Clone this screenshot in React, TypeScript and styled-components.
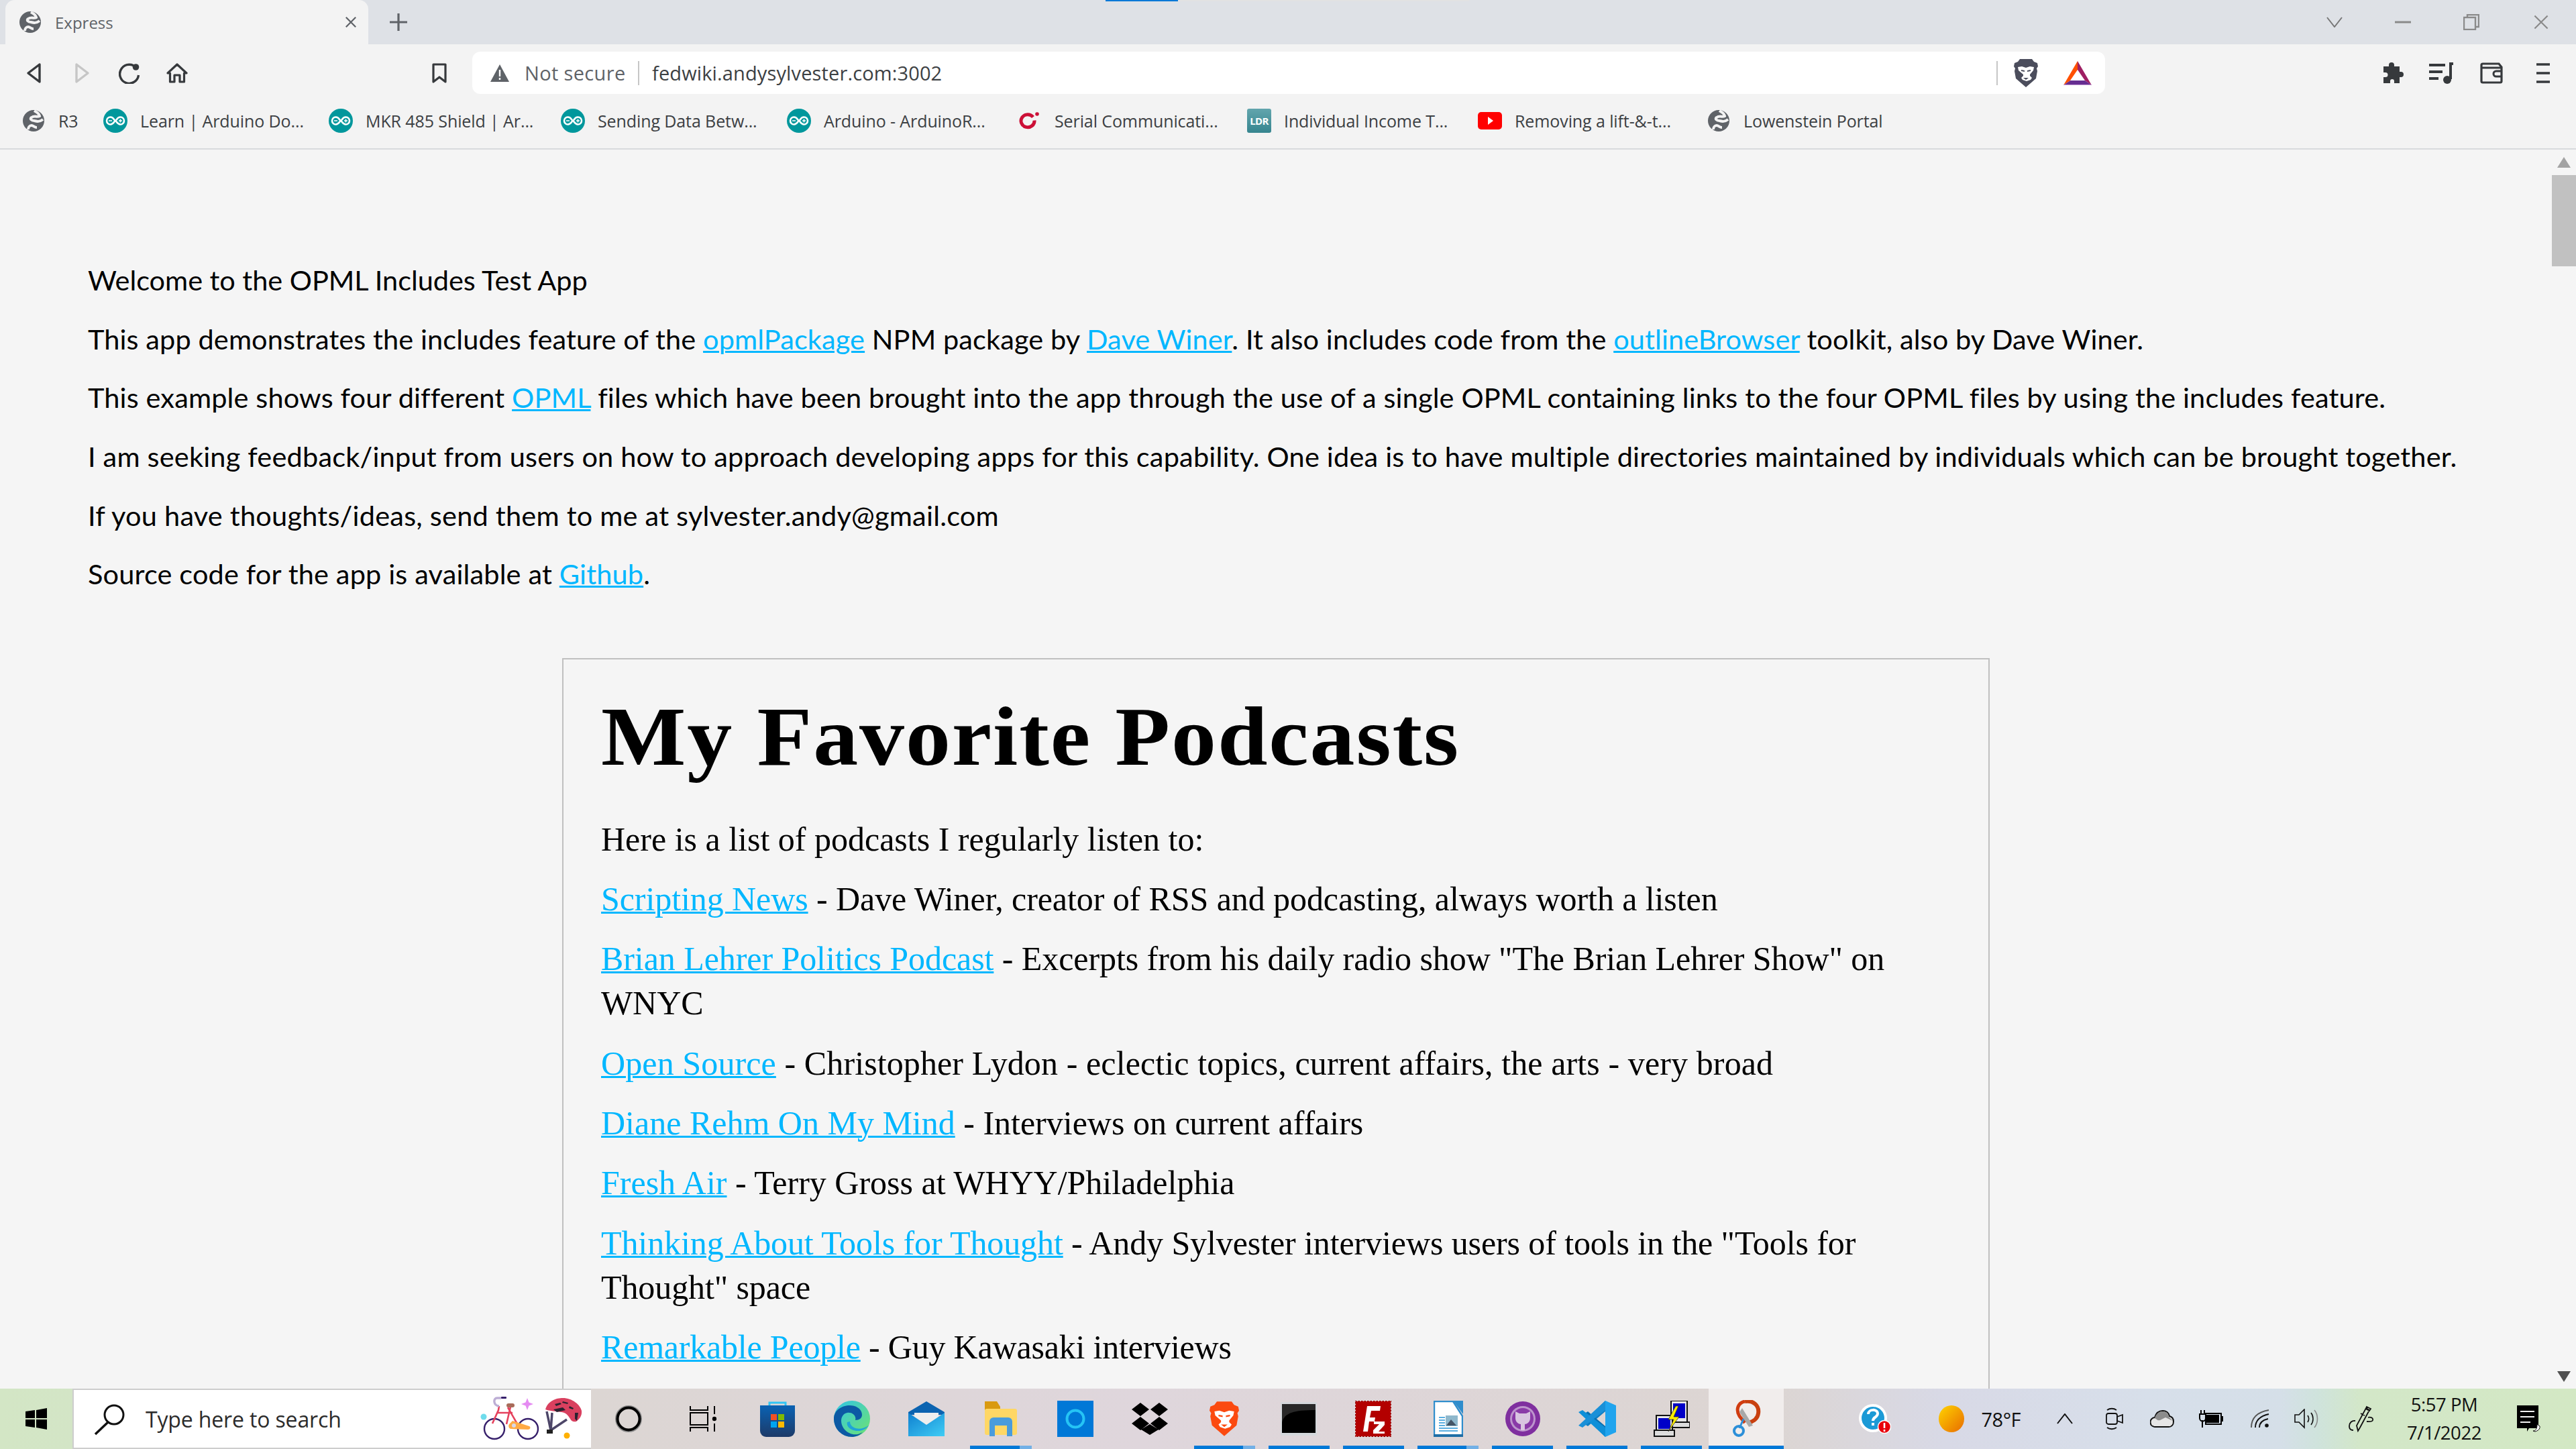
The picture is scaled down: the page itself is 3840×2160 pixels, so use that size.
import React from 'react';
import styled, { createGlobalStyle } from 'styled-components';

const Global = createGlobalStyle`
  html, body { margin: 0; padding: 0; width: 3840px; height: 2160px; overflow: hidden; background: #f5f5f5; }
  * { box-sizing: border-box; }
`;
const UI = `"Open Sans", "Noto Sans", sans-serif`;

const Screen = styled.div`width:3840px;height:2160px;display:flex;flex-direction:column;overflow:hidden;position:relative;font-family:${UI};`;
const LoadBar = styled.div`position:absolute;top:0;left:1648px;width:542px;height:2px;background:#e2e2e2;`;
const LoadFill = styled.div`width:108px;height:100%;background:#0078d7;`;

const TabStrip = styled.div`height:66px;background:#dee1e6;display:flex;align-items:flex-end;padding-left:8px;flex:none;`;
const Tab = styled.div`width:541px;height:66px;background:#f3f3f3;border-radius:14px 14px 0 0;display:flex;align-items:center;padding:0 17px 0 21px;`;
const TabTitle = styled.span`margin-left:21px;font-size:24px;color:#5f6368;flex:1;letter-spacing:0;`;
const NewTab = styled.div`width:46px;height:66px;margin-left:22px;display:flex;align-items:center;justify-content:center;`;
const Grow = styled.div`flex:1;`;
const WinButton = styled.div<{ $w: number; $ml?: number }>`width:${p => p.$w}px;margin-left:${p => p.$ml ?? 0}px;height:66px;display:flex;align-items:center;justify-content:center;`;

const Toolbar = styled.div`height:74px;background:#f3f3f3;display:flex;align-items:flex-start;padding:11px 0 0 15px;flex:none;`;
const ToolSlot = styled.div<{ $w: number; $ml?: number; $pl?: number }>`width:${p => p.$w}px;margin-left:${p => p.$ml ?? 0}px;padding-left:${p => p.$pl ?? 0}px;height:63px;display:flex;align-items:center;justify-content:center;flex:none;`;
const Omnibox = styled.div`width:2434px;height:63px;background:#fff;border-radius:12px;display:flex;align-items:center;margin:0 0 0 26px;flex:none;`;
const NotSecure = styled.span`font-size:29px;color:#5f6368;margin-left:12px;letter-spacing:.35px;width:169px;white-space:nowrap;`;
const OmniSep = styled.div`width:2px;height:36px;background:#c6c6c6;flex:none;`;
const Url = styled.span`font-size:29px;color:#3c4043;margin-left:19px;letter-spacing:.13px;white-space:nowrap;width:2004px;`;

const BookmarkBar = styled.div`height:83px;background:#f3f3f3;border-bottom:2px solid #d8dadd;display:flex;align-items:center;padding:0 0 2px 32px;gap:38px;flex:none;`;
const Bookmark = styled.div`display:flex;align-items:center;gap:19px;`;
const BookmarkIconBox = styled.div`width:36px;height:36px;display:flex;align-items:center;justify-content:center;flex:none;`;
const BookmarkLabel = styled.span<{ $w: number }>`width:${p => p.$w}px;font-size:25px;color:#3c4043;white-space:nowrap;letter-spacing:-.1px;`;
const LdrBadge = styled.div`width:36px;height:36px;border-radius:3px;background:linear-gradient(#62a5ad,#36858f);color:#fff;font-size:15px;font-weight:700;display:flex;align-items:center;justify-content:center;letter-spacing:-.6px;`;

const Viewport = styled.div`flex:1;min-height:0;display:flex;background:#f5f5f5;overflow:hidden;`;
const Page = styled.div`width:3804px;height:100%;overflow:hidden;padding-top:161px;flex:none;`;
const Intro = styled.p<{ $s: number }>`margin:0 0 21.7px;padding-left:131px;font:400 41.5px/66px "Lato",sans-serif;color:#000;letter-spacing:${p => p.$s}px;white-space:nowrap;`;
const Link = styled.a`color:#00b7ff;text-decoration:underline;text-decoration-thickness:3px;`;
const Card = styled.div`width:2128px;margin:93px auto 0;border:2px solid #c0c0c0;padding:0 56px 240px;`;
const Title = styled.h1`margin:57px 0 0;font:700 124px/118px "Liberation Serif",serif;letter-spacing:1.75px;color:#000;white-space:nowrap;transform:scaleX(1.08);transform-origin:left center;`;
const Para = styled.p<{ $s?: number }>`margin:0 0 23px;font:400 50px/66.3px "Liberation Serif",serif;color:#000;letter-spacing:${p => p.$s ?? 0}px;`;
const IntroPara = styled(Para)`margin-top:60px;margin-bottom:22px;`;

const Scrollbar = styled.div`width:36px;height:100%;background:#f5f5f5;display:flex;flex-direction:column;align-items:center;flex:none;`;
const ScrollBtn = styled.div<{ $h?: number }>`height:${p => p.$h ?? 36}px;width:36px;display:flex;align-items:center;justify-content:center;flex:none;`;
const Thumb = styled.div`width:36px;height:136px;margin-top:0;background:#c1c1c1;flex:none;`;

const Taskbar = styled.div`height:90px;flex:none;display:flex;background:linear-gradient(90deg,#d3e6c5 0,#d3e5c6 108px,#dcd6d3 881px,#dfd6dc 1700px,#dcd5d2 2640px,#d8d9e6 2900px,#d7dfea 3200px,#d5dfe8 3400px,#cfe3dc 3455px,#d3e7c8 3520px,#d3e8c4 3840px);`;
const StartBtn = styled.div`width:108px;display:flex;align-items:center;justify-content:center;flex:none;padding-left:0;`;
const SearchBox = styled.div`width:773px;height:90px;flex:none;background:#fff;border:2px solid #cdcdcd;border-right:none;display:flex;align-items:center;padding:0 10px 0 29px;`;
const SearchText = styled.span`margin-left:28px;font-size:32px;color:#2b2b2b;letter-spacing:-.15px;flex:1;white-space:nowrap;`;
const Slot = styled.div<{ $active?: boolean }>`width:111.1px;height:90px;flex:none;position:relative;display:flex;align-items:center;justify-content:center;background:${p => p.$active ? '#f1edec' : 'transparent'};`;
const RunBar = styled.div<{ $full?: boolean }>`position:absolute;bottom:0;left:${p => p.$full ? 0 : 10}px;right:${p => p.$full ? 0 : 10}px;height:5px;background:#0078d7;`;
const RunBarStack = styled.div`position:absolute;bottom:0;right:10px;width:18px;height:5px;background:#72b0e6;`;
const Tray = styled.div`flex:1;display:flex;align-items:stretch;padding-left:100px;`;
const TraySlot = styled.div<{ $w: number; $ml?: number }>`width:${p => p.$w}px;margin-left:${p => p.$ml ?? 0}px;display:flex;align-items:center;justify-content:center;flex:none;`;
const Temp = styled.div`width:105px;padding-left:15px;font-size:29px;color:#111;display:flex;align-items:center;letter-spacing:-.5px;`;
const Clock = styled.div`width:156px;display:flex;flex-direction:column;align-items:center;justify-content:center;gap:10px;font-size:27.5px;line-height:32px;color:#111;letter-spacing:-.45px;`;

type S = { s?: number };
const Globe = ({ s = 32 }: S) => (
  <svg width={s} height={s} viewBox="0 0 32 32"><circle cx="16" cy="16" r="16" fill="#5f6368"/><path d="M17 1c3 2 7 3 8 8-3 2-8-1-12 2-3 2 0 5 4 5 4 1 8 2 13-2M8 29c0-3 2-6 5-6 3 0 4 3 8 3" fill="none" stroke="#f3f3f3" strokeWidth="4"/></svg>
);
const Arduino = () => (
  <svg width="36" height="36" viewBox="0 0 36 36"><circle cx="18" cy="18" r="18" fill="#00979c"/><path d="M10.5 12.5c5 0 6 5.500 7.500 5.500s2.500-5.500 7.500-5.500a5.500 5.500 0 0 1 0 11c-5 0-6-5.500-7.500-5.500s-2.500 5.500-7.500 5.500a5.500 5.500 0 0 1 0-11z" fill="none" stroke="#fff" strokeWidth="2.600"/><path d="M8 18h5M23 18h5M25.500 15.500v5" stroke="#fff" strokeWidth="1.600"/></svg>
);
const Opto = () => (
  <svg width="36" height="36" viewBox="0 0 36 36"><path d="M23 12.500a10 9.500 0 1 0 2 5" fill="none" stroke="#cc1037" strokeWidth="5"/><circle cx="29" cy="8" r="2.800" fill="#cc1037"/></svg>
);
const YouTube = () => (
  <svg width="36" height="36" viewBox="0 0 36 36"><rect y="5" width="36" height="26" rx="5" fill="#f00"/><path d="M15 12l8 6-8 6z" fill="#fff"/></svg>
);
const X = ({ s = 20, c = '#5f6368', w = 2.500 }: S & { c?: string; w?: number }) => (
  <svg width={s} height={s} viewBox="0 0 20 20"><path d="M2 2l16 16M18 2L2 18" stroke={c} strokeWidth={w} fill="none"/></svg>
);
const Back = ({ c = '#36393c', flip }: { c?: string; flip?: boolean }) => (
  <svg width="24" height="32" viewBox="0 0 24 32"><path d={flip ? 'M4 3l17 13L4 29z' : 'M20 3 3 16l17 13z'} fill="none" stroke={c} strokeWidth="3.400" strokeLinejoin="round"/></svg>
);
const Reload = () => (
  <svg width="32" height="32" viewBox="0 0 32 32"><path d="M26.500 8.500A14 14 0 1 0 29.500 19" fill="none" stroke="#36393c" strokeWidth="3.400"/><circle cx="25.500" cy="7" r="4.800" fill="#36393c"/></svg>
);
const Home = () => (
  <svg width="32" height="30" viewBox="0 0 32 30"><path d="M2 15 16 2l14 13h-3.500v13H20V18h-8v10H5.500V15z" fill="none" stroke="#36393c" strokeWidth="3.200" strokeLinejoin="round"/></svg>
);
const BookmarkIcon = () => (
  <svg width="22" height="30" viewBox="0 0 22 30"><path d="M2 2h18v26l-9-7-9 7z" fill="none" stroke="#36393c" strokeWidth="3.200" strokeLinejoin="round"/></svg>
);
const Warn = () => (
  <svg width="28" height="26" viewBox="0 0 28 26"><path d="M14 0l14 26H0z" fill="#5f6368"/><path d="M12.800 8h2.400v10h-2.400zM12.800 20h2.400v3h-2.400z" fill="#fff"/></svg>
);
const LionMark = ({ w, h, face, body }: { w: number; h: number; face: string; body: string }) => (
  <svg width={w} height={h} viewBox="0 0 36 42">
    <path d="M9 0h18l3 4 5 2 1 5-2 3 1 4-2 11-8 7-7 6-7-6-8-7L1 18l1-4-2-3 1-5 5-2z" fill={body}/>
    <path d="M6 12l6-1 6 2 6-2 6 1-1 5-5 6v2l3 3-2 3-6 2-6-2-2-3 3-3v-2L7 17z" fill={face}/>
    <path d="M11 16l5 1v2l-5-1zM25 16l-5 1v2l5-1zM14 28h8l-4 3z" fill={body}/>
  </svg>
);
const Bat = () => (
  <svg width="42" height="36" viewBox="0 0 42 36">
    <path d="M21 0v13L10 29 0 36z" fill="#ff5000"/>
    <path d="M21 0l21 36-10-7-11-16z" fill="#9e1f63"/>
    <path d="M0 36l10-7h22l10 7z" fill="#662d91"/>
    <path d="M0 35.500h42" stroke="#c39ad4" strokeWidth="1"/>
  </svg>
);
const Puzzle = () => (
  <svg width="34" height="34" viewBox="0 0 34 34"><path d="M3 7h8V5a4 4 0 0 1 8 0v2h8v8h2a4 4 0 0 1 0 8h-2v9H19v-3a3 3 0 0 0-6 0v3H3v-9h3a3.500 3.500 0 0 0 0-7H3z" fill="#36393c"/></svg>
);
const Playlist = () => (
  <svg width="36" height="32" viewBox="0 0 36 32"><path d="M0 4h24M0 14h20M0 24h14M32 3v22" stroke="#36393c" strokeWidth="4" fill="none"/><path d="M30 2h6" stroke="#36393c" strokeWidth="4"/><circle cx="27" cy="26" r="6" fill="#36393c"/></svg>
);
const Wallet = () => (
  <svg width="34" height="32" viewBox="0 0 34 32"><path d="M4 2h24l4 5v21a2 2 0 0 1-2 2H4a2 2 0 0 1-2-2V4a2 2 0 0 1 2-2zM2 8h30" fill="none" stroke="#36393c" strokeWidth="3.200"/><path d="M32 13h-8a3.500 3.500 0 0 0 0 8h8" fill="none" stroke="#36393c" strokeWidth="3"/></svg>
);
const Menu = () => (
  <svg width="22" height="32" viewBox="0 0 22 32"><path d="M1 3h20M1 16h20M1 29h20" stroke="#36393c" strokeWidth="3.600"/></svg>
);
const Chevron = ({ up, c = '#777' }: { up?: boolean; c?: string }) => (
  <svg width="24" height="16" viewBox="0 0 24 16"><path d={up ? 'M1 15 12 1l11 14' : 'M1 1l11 14L23 1'} fill="none" stroke={c} strokeWidth="2"/></svg>
);
const Arrow = ({ down }: { down?: boolean }) => (
  <svg width="20" height="18" viewBox="0 0 20 18"><path d={down ? 'M10 17 20 1H0z' : 'M10 1l10 16H0z'} fill={down ? '#505050' : '#a3a3a3'}/></svg>
);

const WinLogo = () => (
  <svg width="32" height="32" viewBox="0 0 32 32"><path d="M0 5l14-2v12H0zM16 3l16-3v15H16zM0 17h14v12L0 27zM16 17h16v15l-16-3z" fill="#000"/></svg>
);
const SearchIcon = () => (
  <svg width="50" height="50" viewBox="0 0 50 50"><circle cx="31" cy="19" r="14" fill="none" stroke="#111" strokeWidth="3"/><path d="M22 30 3 48" stroke="#111" strokeWidth="3.500"/></svg>
);
const BikeArt = () => (
  <svg width="156" height="70" viewBox="0 0 156 70">
    <circle cx="6" cy="32" r="4.500" fill="#6fdcec"/>
    <path d="M71 4l2.500 6.500L80 13l-6.500 2.500L71 22l-2.500-6.500L62 13l6.500-2.500z" fill="#e58bf2"/>
    <g fill="none" strokeWidth="2.400" stroke="#37206b"><circle cx="22" cy="50" r="15"/><circle cx="72" cy="50" r="15"/></g>
    <path d="M29 16l-1 6-9 20M27 26l22 0M46 17l-6 26M42 18l16 28" fill="none" stroke="#e5425d" strokeWidth="2.600"/>
    <path d="M32 4h-6c-6 0-6 11 3 12" fill="none" stroke="#bdaed5" strokeWidth="3.400"/>
    <rect x="32" y="2" width="8" height="3" rx="1" fill="#37206b"/>
    <rect x="40" y="12" width="12" height="6" rx="3" fill="#a86c5a"/>
    <path d="M44 43l5-5 25 8c3 2 1 5-2 5l-25-1c-3 0-5-4-3-7z" fill="#ffaa44"/><circle cx="51" cy="45" r="3" fill="#d8d8e8"/>
    <path d="M100 24l6 28 24-16" fill="none" stroke="#4d4668" strokeWidth="3.500"/><path d="M108 26l-2 26" stroke="#4d4668" strokeWidth="3.500"/><rect x="100" y="51" width="9" height="6" fill="#222"/>
    <path d="M98 21c4-13 16-17 26-17 14 0 26 10 28 19 1 8-4 13-8 16-4 1-7 0-9-4-3-5-6-9-13-10-10-2-17-1-24-4z" fill="#d9405f"/>
    <path d="M112 13l8-2 2 2-8 3zM124 9l8 2-1 2-8-2zM110 21l14-3 4 4-13 3zM134 16l6 3-1 2-6-2zM142 26l5 0-2 12-3-3z" fill="#2b2230"/>
    <circle cx="130" cy="60" r="4.500" fill="#ffb000"/>
  </svg>
);
const Cortana = () => (
  <svg width="40" height="40" viewBox="0 0 40 40"><circle cx="20" cy="20" r="18" fill="none" stroke="#8a8a8a" strokeWidth="4"/><circle cx="20" cy="20" r="16.500" fill="none" stroke="#000" strokeWidth="4"/></svg>
);
const TaskView = () => (
  <svg width="40" height="40" viewBox="0 0 40 40"><path d="M1 1v6h26V1M1 39v-6h26v6M1 11h26v18H1zM37 1v12M37 27v12" fill="none" stroke="#000" strokeWidth="2"/><circle cx="37" cy="20" r="3.200" fill="#000"/></svg>
);
const Store = () => (
  <svg width="52" height="54" viewBox="0 0 52 54">
    <defs><linearGradient id="st" x1="0" y1="0" x2="0" y2="1"><stop offset="0" stopColor="#0a62b3"/><stop offset="1" stopColor="#1d3a68"/></linearGradient></defs>
    <path d="M14 8V3h24v5" fill="none" stroke="#30c5f5" strokeWidth="3"/>
    <path d="M0 7h52v38a9 9 0 0 1-9 9H9a9 9 0 0 1-9-9z" fill="url(#st)"/>
    <rect x="16" y="20" width="9" height="9" fill="#f25022"/><rect x="27" y="20" width="9" height="9" fill="#7fba00"/><rect x="16" y="31" width="9" height="9" fill="#00a4ef"/><rect x="27" y="31" width="9" height="9" fill="#ffb900"/>
  </svg>
);
const Edge = () => (
  <svg width="54" height="54" viewBox="0 0 54 54">
    <defs><linearGradient id="ed" x1="0" y1="0" x2="1" y2="1"><stop offset="0" stopColor="#30c5e8"/><stop offset="1" stopColor="#6fe36f"/></linearGradient></defs>
    <circle cx="27" cy="27" r="27" fill="url(#ed)"/>
    <path d="M0 27C0 14 12 7 24 7c10 0 18 6 18 14 0 5-4 8-10 8 2-7-5-12-12-11C13 19 9 27 12 36c3 9 13 16 24 14 3-1 5-2 7-3C38 52 32 54 27 54 12 54 0 42 0 27z" fill="#0c59a4"/>
    <path d="M20 32c-2 8 8 14 18 13 6-1 10-3 14-8-8 5-16 6-22 3-4-2-6-5-6-9z" fill="#1fa3d8"/>
  </svg>
);
const Mail = () => (
  <svg width="54" height="52" viewBox="0 0 54 52">
    <defs><linearGradient id="ml" x1="0" y1="0" x2="1" y2="1"><stop offset="0" stopColor="#0f80d0"/><stop offset="1" stopColor="#40cdf5"/></linearGradient></defs>
    <path d="M0 16 27 0l27 16v4H0z" fill="#0b63b0"/>
    <path d="M9 17h36v8L27 36 9 25z" fill="#eeeeee"/>
    <path d="M0 17l27 18 27-18v35H0z" fill="url(#ml)"/>
  </svg>
);
const Folder = () => (
  <svg width="48" height="52" viewBox="0 0 48 52">
    <path d="M0 0h18l5 8v5H0z" fill="#d99a10"/>
    <rect y="11" width="48" height="39" rx="3" fill="#ffd765"/>
    <path d="M7 52V30a6 6 0 0 1 6-6h22a6 6 0 0 1 6 6v22h-8V36H15v16z" fill="#4a9cdc"/>
  </svg>
);
const BlueTile = () => (
  <svg width="54" height="54" viewBox="0 0 54 54"><rect width="54" height="54" fill="#0078d7"/><circle cx="27" cy="27" r="12.500" fill="none" stroke="#25c4f5" strokeWidth="4"/></svg>
);
const Dropbox = () => (
  <svg width="54" height="48" viewBox="0 0 54 48"><path d="M13 0l13 10-13 10L0 10zM41 0l13 10-13 10-13-10zM13 21l13 10-13 10L0 31zM41 21l13 10-13 10-13-10zM27 32l13 8-13 8-13-8z" fill="#000"/></svg>
);
const Terminal = () => (
  <svg width="54" height="50" viewBox="0 0 54 50">
    <rect width="54" height="50" fill="#d4d8dc"/>
    <rect x="2" y="3" width="50" height="43" fill="#282828"/>
    <path d="M2 46V30C6 16 20 12 52 12v34z" fill="#000"/>
  </svg>
);
const FileZilla = () => (
  <svg width="54" height="54" viewBox="0 0 54 54">
    <rect x="1" y="1" width="52" height="52" fill="#b30000"/>
    <rect width="54" height="54" fill="none" stroke="#8f0000" strokeWidth="2" strokeDasharray="2.500 2"/>
    <path d="M12 46 18 8h20l-1 7H24l-2 10h8l-1 6h-8l-2 15z" fill="#fff"/>
    <path d="M28 31h16v5L35 46h9v3H27v-5l9-9h-8z" fill="#fff"/>
  </svg>
);
const Writer = () => (
  <svg width="44" height="54" viewBox="0 0 44 54">
    <path d="M1 1h28l14 22v30H1z" fill="#fff" stroke="#2f8dcc" strokeWidth="2.400"/>
    <path d="M29 0h15v20z" fill="#2f8dcc"/>
    <rect x="18" y="22" width="18" height="16" fill="#8fb8cc"/><path d="M19 37l7-9 8 9z" fill="#456"/>
    <path d="M8 25h9M8 29h9M8 33h9M8 37h9M8 41h28M8 45h28" stroke="#5aaee0" strokeWidth="2"/>
    <rect y="50" width="44" height="4" fill="#1f6ea6"/>
  </svg>
);
const GitHub = () => (
  <svg width="52" height="54" viewBox="0 0 52 54">
    <circle cx="26" cy="27" r="26" fill="#7f2f9f"/><circle cx="26" cy="27" r="19" fill="#f0e9f3" opacity=".55"/><circle cx="26" cy="27" r="16" fill="#8a3aa8"/>
    <path d="M15 16l6 3h10l6-3v10c0 6-5 9-8 9v9h-6v-9c-3 0-8-3-8-9z" fill="#d9c5e0"/>
  </svg>
);
const VsCode = () => (
  <svg width="56" height="54" viewBox="0 0 56 54">
    <path d="M40 0l16 7v40l-16 7z" fill="#20a4ee"/>
    <path d="M40 0v16L14 38 6 33z" fill="#0d7fc4"/>
    <path d="M40 54V38L14 16 6 21z" fill="#0a6fb0"/>
    <path d="M0 17l6-3 34 26v14z" fill="#0e8fd8"/><path d="M0 37l6 3L40 14V0z" fill="#1a90d8"/>
  </svg>
);
const NetIcon = () => (
  <svg width="54" height="54" viewBox="0 0 54 54">
    <rect x="26" y="0" width="24" height="32" fill="#e8e8e8" stroke="#111" strokeWidth="2"/><rect x="29" y="4" width="18" height="22" fill="#0000c8"/><rect x="28" y="32" width="26" height="8" fill="#ddd" stroke="#111" strokeWidth="2"/>
    <rect x="4" y="22" width="24" height="22" fill="#e8e8e8" stroke="#111" strokeWidth="2"/><rect x="7" y="26" width="18" height="16" fill="#0000c8"/><rect x="1" y="44" width="30" height="9" fill="#ddd" stroke="#111" strokeWidth="2"/>
    <path d="M33 8 22 28h8l-8 18 16-22h-8l7-16z" fill="#ffef00" stroke="#333" strokeWidth=".8"/>
  </svg>
);
const ActiveApp = () => (
  <svg width="44" height="56" viewBox="0 0 44 56">
    <path d="M20 2C10 4 6 14 12 24l8 10" fill="none" stroke="#d03c10" strokeWidth="5"/>
    <path d="M20 2c12-2 22 6 20 18-1 8-8 12-14 14" fill="none" stroke="#c9400f" strokeWidth="6"/>
    <path d="M16 12l16 26-6 2L12 18z" fill="#a8a8a8"/>
    <circle cx="11" cy="46" r="7" fill="none" stroke="#2c8fd8" strokeWidth="4"/><path d="M18 28l-6 14" stroke="#2c8fd8" strokeWidth="3"/>
  </svg>
);
const Help = () => (
  <svg width="48" height="44" viewBox="0 0 48 44">
    <circle cx="21" cy="21" r="21" fill="#fff"/><circle cx="21" cy="21" r="17" fill="#1b9ad6"/>
    <path d="M14 15c0-8 14-8 14-1 0 6-7 5-7 11M21 28v4" fill="none" stroke="#fff" strokeWidth="4"/>
    <circle cx="38" cy="34" r="9.500" fill="#e8000b" stroke="#fff" strokeWidth="1.500"/><path d="M38 28v8M38 38v3" stroke="#fff" strokeWidth="2.600"/>
  </svg>
);
const Sun = () => (
  <svg width="40" height="40" viewBox="0 0 38 40"><defs><linearGradient id="sn" x1="0" y1="0" x2="1" y2="1"><stop offset="0" stopColor="#ffd400"/><stop offset="1" stopColor="#e86c00"/></linearGradient></defs><ellipse cx="19" cy="20" rx="19" ry="20" fill="url(#sn)"/></svg>
);
const Camera = () => (
  <svg width="26" height="34" viewBox="0 0 26 34" fill="none" stroke="#111" strokeWidth="1.800"><rect x="1" y="9" width="16" height="16" rx="3"/><path d="M17 14l8-3v12l-8-3zM2 4c4-3 10-3 14 0M2 30c4 3 10 3 14 0"/></svg>
);
const Cloud = () => (
  <svg width="36" height="26" viewBox="0 0 36 26">
    <path d="M8 25a7 7 0 0 1-1-14C9 4 14 1 19 1c5 0 9 3 10 8 4 1 6 4 6 8 0 5-3 8-7 8z" fill="#e6e6e6" stroke="#111" strokeWidth="2"/>
    <path d="M7 12C9 5 14 2 19 2c5 0 8 3 9 8l6 6-11-5-10 5z" fill="#8c8c8c"/><path d="M2 22l11-7 10 4 11 0-4 5H7z" fill="#e6e6e6"/>
  </svg>
);
const Battery = () => (
  <svg width="36" height="26" viewBox="0 0 36 26" fill="none"><path d="M3 0v6M8 0v6M1 6h9v6a4 4 0 0 1-9 0zM5 15v11" stroke="#000" strokeWidth="2"/><rect x="10" y="5" width="23" height="16" stroke="#000" strokeWidth="2"/><rect x="10" y="7" width="20" height="12" fill="#000"/><rect x="33" y="9" width="3" height="8" fill="#000"/></svg>
);
const Wifi = () => (
  <svg width="28" height="28" viewBox="0 0 28 28" fill="none" stroke="#111"><path d="M1 27C1 13 10 4 27 1" stroke="#555" strokeWidth="1.800"/><path d="M7 27C7 17 14 10 27 7" strokeWidth="1.800"/><path d="M13 27c0-6 4-11 13-13" strokeWidth="1.800"/><circle cx="24" cy="24" r="2.800" fill="#111" stroke="none"/></svg>
);
const Volume = () => (
  <svg width="36" height="30" viewBox="0 0 36 30" fill="none" stroke="#111" strokeWidth="1.600"><path d="M1 9h6l8-8v27l-8-8H1z"/><path d="M20 10c2 3 2 7 0 10M25 6c4 5 4 13 0 18"/><path d="M30 2c6 7 6 19 0 26" stroke="#888"/></svg>
);
const Pen = () => (
  <svg width="40" height="40" viewBox="0 0 40 40" fill="none" stroke="#111" strokeWidth="1.800"><path d="M14 38 12 30 26 4l5 3-14 26zM18 12l6 3M27 2l6 3-2 3-5-3zM29 18c3-1 8 0 7 4-1 3-5 2-9 2M10 23c-5-1-9 3-9 8s3 6 6 6"/></svg>
);
const Notify = () => (
  <svg width="38" height="40" viewBox="0 0 38 40">
    <path d="M0 0h32v34H18l-3 5v-5H0z" fill="#000"/><path d="M5 9h21M5 17h21M5 25h15" stroke="#f2f2f2" strokeWidth="2"/>
    <path d="M24 38c4 0 6-3 6-10l4 3c1 4-3 7-7 8z" fill="#fff" stroke="#111"/>
  </svg>
);

const bookmarks: { label: string; w: number; icon: React.ReactNode }[] = [
  { label: 'R3', w: 29, icon: <Globe /> },
  { label: 'Learn | Arduino Do...', w: 243, icon: <Arduino /> },
  { label: 'MKR 485 Shield | Ar...', w: 253, icon: <Arduino /> },
  { label: 'Sending Data Betw...', w: 244, icon: <Arduino /> },
  { label: 'Arduino - ArduinoR...', w: 251, icon: <Arduino /> },
  { label: 'Serial Communicati...', w: 249, icon: <Opto /> },
  { label: 'Individual Income T...', w: 251, icon: <LdrBadge>LDR</LdrBadge> },
  { label: 'Removing a lift-&-t...', w: 248, icon: <YouTube /> },
  { label: 'Lowenstein Portal', w: 209, icon: <Globe /> },
];

export default function App() {
  return (
    <Screen>
      <Global />
      <LoadBar><LoadFill /></LoadBar>
      <TabStrip>
        <Tab>
          <Globe />
          <TabTitle>Express</TabTitle>
          <X s={18} />
        </Tab>
        <NewTab>
          <svg width="28" height="28" viewBox="0 0 28 28"><path d="M14 1v26M1 14h26" stroke="#5f6368" strokeWidth="3.200"/></svg>
        </NewTab>
        <Grow />
        <WinButton $w={52}><Chevron /></WinButton>
        <WinButton $w={100} $ml={26}>
          <svg width="24" height="4" viewBox="0 0 24 4"><path d="M0 2h24" stroke="#8a8a8a" strokeWidth="3"/></svg>
        </WinButton>
        <WinButton $w={104}>
          <svg width="24" height="24" viewBox="0 0 24 24" fill="none" stroke="#8a8a8a" strokeWidth="2.400"><rect x="1" y="5" width="17" height="18"/><path d="M6 5V1h17v18h-5"/></svg>
        </WinButton>
        <WinButton $w={103}><X s={24} c="#8a8a8a" w={1.800} /></WinButton>
        <WinButton $w={1} />
      </TabStrip>
      <Toolbar>
        <ToolSlot $w={71}><Back /></ToolSlot>
        <ToolSlot $w={71}><Back c="#c6c6c6" flip /></ToolSlot>
        <ToolSlot $w={71}><Reload /></ToolSlot>
        <ToolSlot $w={72}><Home /></ToolSlot>
        <ToolSlot $w={46} $ml={332}><BookmarkIcon /></ToolSlot>
        <Omnibox>
          <ToolSlot $w={66} $pl={16}><Warn /></ToolSlot>
          <NotSecure>Not secure</NotSecure>
          <OmniSep />
          <Url>fedwiki.andysylvester.com:3002</Url>
          <OmniSep />
          <ToolSlot $w={84}><LionMark w={36} h={42} body="#4b4d5c" face="#fff" /></ToolSlot>
          <ToolSlot $w={70}><Bat /></ToolSlot>
        </Omnibox>
        <ToolSlot $w={72} $ml={393}><Puzzle /></ToolSlot>
        <ToolSlot $w={72}><Playlist /></ToolSlot>
        <ToolSlot $w={77}><Wallet /></ToolSlot>
        <ToolSlot $w={77}><Menu /></ToolSlot>
      </Toolbar>
      <BookmarkBar>
        {bookmarks.map(b => (
          <Bookmark key={b.label}>
            <BookmarkIconBox>{b.icon}</BookmarkIconBox>
            <BookmarkLabel $w={b.w}>{b.label}</BookmarkLabel>
          </Bookmark>
        ))}
      </BookmarkBar>
      <Viewport>
        <Page>
          <Intro $s={-.05}>Welcome to the OPML Includes Test App</Intro>
          <Intro $s={.1}>This app demonstrates the includes feature of the <Link>opmlPackage</Link> NPM package by <Link>Dave Winer</Link>. It also includes code from the <Link>outlineBrowser</Link> toolkit, also by Dave Winer.</Intro>
          <Intro $s={.14}>This example shows four different <Link>OPML</Link> files which have been brought into the app through the use of a single OPML containing links to the four OPML files by using the includes feature.</Intro>
          <Intro $s={.19}>I am seeking feedback/input from users on how to approach developing apps for this capability. One idea is to have multiple directories maintained by individuals which can be brought together.</Intro>
          <Intro $s={.22}>If you have thoughts/ideas, send them to me at sylvester.andy@gmail.com</Intro>
          <Intro $s={.15}>Source code for the app is available at <Link>Github</Link>.</Intro>
          <Card>
            <Title>My Favorite Podcasts</Title>
            <IntroPara>Here is a list of podcasts I regularly listen to:</IntroPara>
            <Para $s={-.08}><Link>Scripting News</Link> - Dave Winer, creator of RSS and podcasting, always worth a listen</Para>
            <Para $s={-.07}><Link>Brian Lehrer Politics Podcast</Link> - Excerpts from his daily radio show "The Brian Lehrer Show" on WNYC</Para>
            <Para $s={.11}><Link>Open Source</Link> - Christopher Lydon - eclectic topics, current affairs, the arts - very broad</Para>
            <Para><Link>Diane Rehm On My Mind</Link> - Interviews on current affairs</Para>
            <Para><Link>Fresh Air</Link> - Terry Gross at WHYY/Philadelphia</Para>
            <Para $s={-.1}><Link>Thinking About Tools for Thought</Link> - Andy Sylvester interviews users of tools in the "Tools for Thought" space</Para>
            <Para $s={-.2}><Link>Remarkable People</Link> - Guy Kawasaki interviews</Para>
          </Card>
        </Page>
        <Scrollbar>
          <ScrollBtn $h={38}><Arrow /></ScrollBtn>
          <Thumb />
          <Grow />
          <ScrollBtn><Arrow down /></ScrollBtn>
        </Scrollbar>
      </Viewport>
      <Taskbar>
        <StartBtn><WinLogo /></StartBtn>
        <SearchBox>
          <SearchIcon />
          <SearchText>Type here to search</SearchText>
          <BikeArt />
        </SearchBox>
        <Slot><Cortana /></Slot>
        <Slot><TaskView /></Slot>
        <Slot><Store /></Slot>
        <Slot><Edge /></Slot>
        <Slot><Mail /></Slot>
        <Slot><Folder /><RunBar /><RunBarStack /></Slot>
        <Slot><BlueTile /></Slot>
        <Slot><Dropbox /></Slot>
        <Slot><LionMark w={44} h={54} body="#fb4a10" face="#fff" /><RunBar /><RunBarStack /></Slot>
        <Slot><Terminal /><RunBar /></Slot>
        <Slot><FileZilla /><RunBar /></Slot>
        <Slot><Writer /><RunBar /><RunBarStack /></Slot>
        <Slot><GitHub /><RunBar /></Slot>
        <Slot><VsCode /><RunBar /></Slot>
        <Slot><NetIcon /><RunBar /></Slot>
        <Slot $active><ActiveApp /><RunBar $full /></Slot>
        <Tray>
          <TraySlot $w={72}><Help /></TraySlot>
          <TraySlot $w={60} $ml={48}><Sun /></TraySlot>
          <Temp>78°F</Temp>
          <TraySlot $w={68}><Chevron up c="#111" /></TraySlot>
          <TraySlot $w={80}><Camera /></TraySlot>
          <TraySlot $w={62}><Cloud /></TraySlot>
          <TraySlot $w={84}><Battery /></TraySlot>
          <TraySlot $w={62}><Wifi /></TraySlot>
          <TraySlot $w={76}><Volume /></TraySlot>
          <TraySlot $w={90}><Pen /></TraySlot>
          <Clock><span>5:57 PM</span><span>7/1/2022</span></Clock>
          <TraySlot $w={98}><Notify /></TraySlot>
        </Tray>
      </Taskbar>
    </Screen>
  );
}
